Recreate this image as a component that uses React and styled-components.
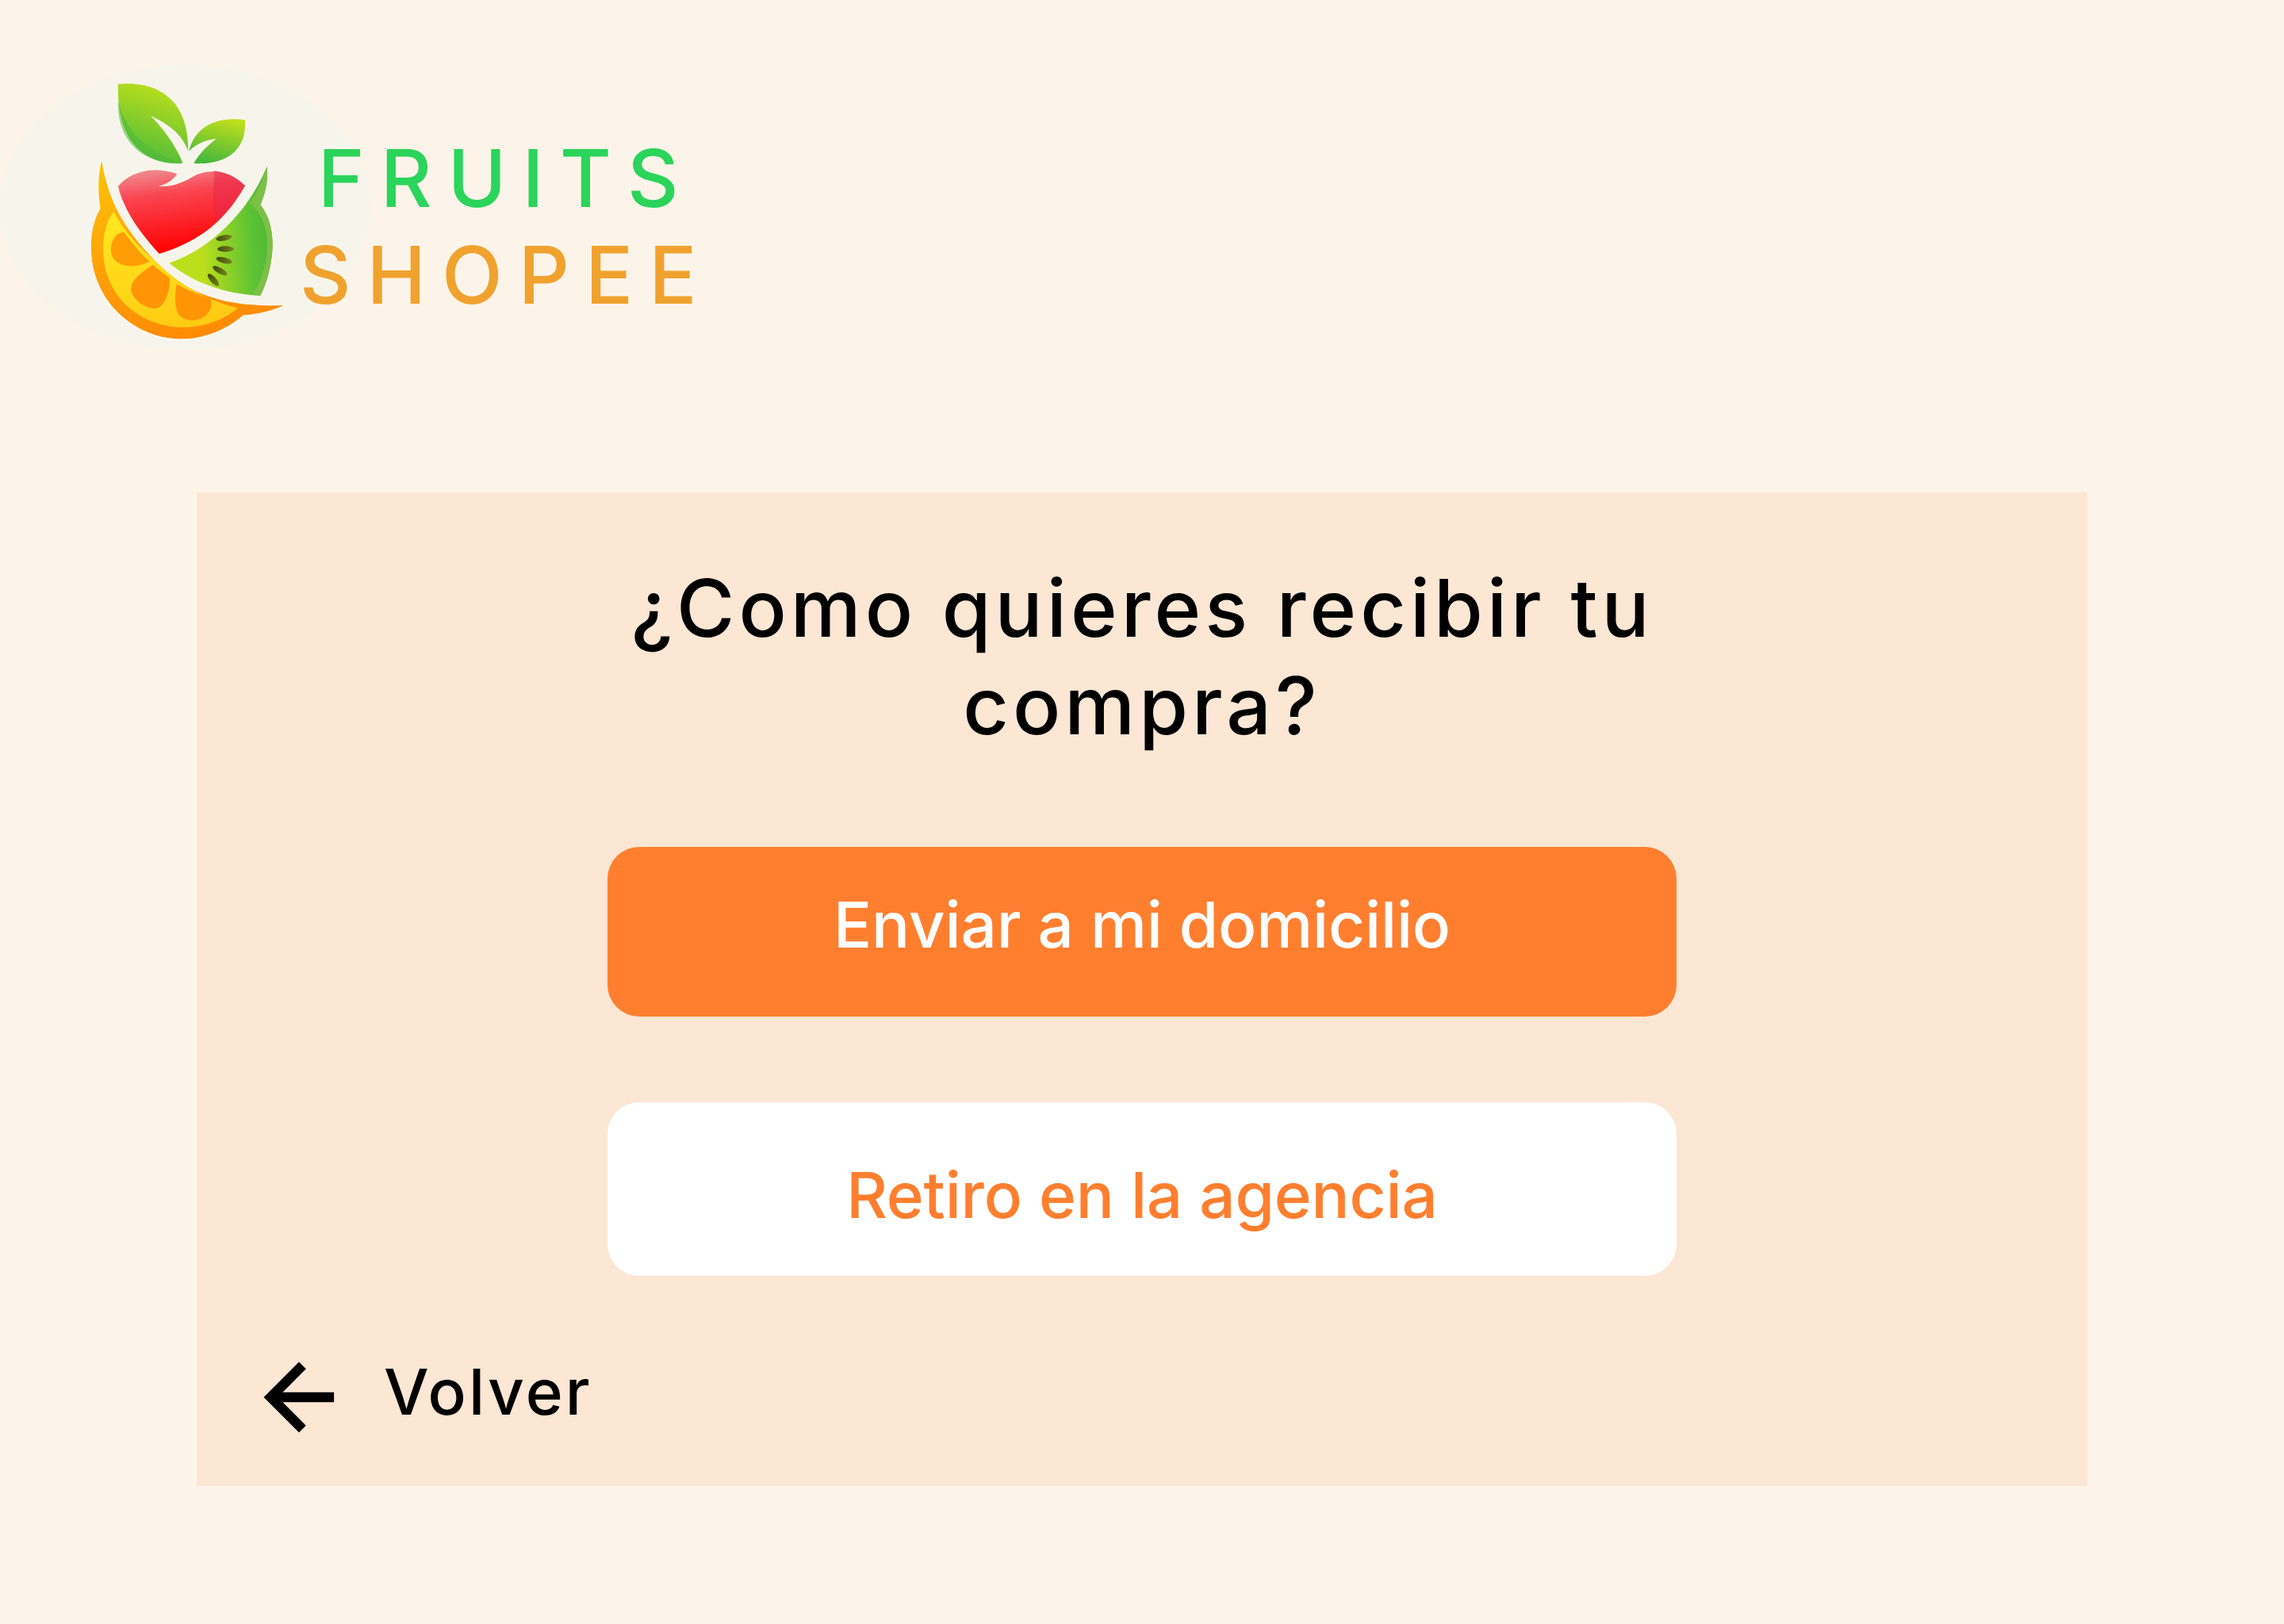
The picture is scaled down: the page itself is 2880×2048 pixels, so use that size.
import React from "react";
import styled, { createGlobalStyle } from "styled-components";

const GlobalStyle = createGlobalStyle`
  * { box-sizing: border-box; }
  body {
    margin: 0;
    background: #fdf4e9;
    font-family: Inter, "Liberation Sans", sans-serif;
  }
`;

function LogoMark() {
  return (
    <LogoSvg viewBox="0 0 1500 1200" aria-label="Fruits Shopee">
      <defs>
        <linearGradient id="leafBig" x1="0.65" y1="0.05" x2="0.4" y2="1">
          <stop offset="0" stopColor="#bade1c" />
          <stop offset="1" stopColor="#4fbb3b" />
        </linearGradient>
        <linearGradient id="leafSmall" x1="0.7" y1="0" x2="0.4" y2="1">
          <stop offset="0" stopColor="#c0df1c" />
          <stop offset="1" stopColor="#46b73e" />
        </linearGradient>
        <linearGradient id="apple" x1="0.35" y1="0" x2="0.55" y2="0.95">
          <stop offset="0" stopColor="#f0868c" />
          <stop offset="0.3" stopColor="#fa4450" />
          <stop offset="1" stopColor="#ff0000" />
        </linearGradient>
        <linearGradient id="kiwi" x1="0" y1="0.6" x2="1" y2="0.5">
          <stop offset="0.3" stopColor="#bcdf1c" />
          <stop offset="0.8" stopColor="#5cc234" />
          <stop offset="1" stopColor="#4db83a" />
        </linearGradient>
        <linearGradient id="orangeRim" x1="0.2" y1="0" x2="0.5" y2="1">
          <stop offset="0" stopColor="#ffc107" />
          <stop offset="0.55" stopColor="#ff9f06" />
          <stop offset="1" stopColor="#ff8a05" />
        </linearGradient>
        <linearGradient id="orangeFlesh" x1="0.2" y1="0" x2="0.5" y2="1">
          <stop offset="0" stopColor="#ffe81f" />
          <stop offset="1" stopColor="#ffcb14" />
        </linearGradient>
        <linearGradient id="seed" x1="0" y1="0" x2="1" y2="0">
          <stop offset="0" stopColor="#3f4a08" />
          <stop offset="1" stopColor="#76851a" />
        </linearGradient>
      </defs>

      <ellipse cx="700" cy="605" rx="702" ry="540" fill="#f7f5eb" />

      <path
        fill="url(#leafBig)"
        d="M447 138C590 125 715 190 712 392C690 330 640 290 570 258C620 310 665 370 692 438C560 445 440 370 447 138Z"
      />
      <path
        fill="#4cb93a"
        opacity="0.55"
        d="M447 200C470 310 560 400 692 438C560 445 440 370 447 200Z"
      />
      <path
        fill="url(#leafSmall)"
        d="M927 274C850 262 740 280 715 392C740 365 775 350 818 345C785 370 755 400 733 438C840 445 935 400 927 274Z"
      />

      <path
        fill="url(#orangeRim)"
        d="M385 428C370 480 370 550 380 610C340 670 335 780 360 860C410 1020 560 1105 690 1102C780 1100 860 1065 920 1012C970 1010 1030 995 1072 975C850 985 700 930 590 810C480 700 410 590 385 428Z"
      />
      <path
        fill="url(#orangeFlesh)"
        d="M430 620C385 680 380 780 405 860C450 990 570 1060 700 1058C780 1055 850 1030 900 985C790 960 680 900 590 810C520 750 465 690 430 620Z"
      />
      <path
        fill="#ff9c06"
        d="M470 698C430 700 415 745 422 780C430 820 490 845 565 810C530 775 495 735 470 698Z"
      />
      <path
        fill="#ff9504"
        d="M578 822C535 850 495 880 496 915C497 950 550 990 590 987C625 985 650 900 640 870C620 855 598 840 578 822Z"
      />
      <path
        fill="#ff9504"
        d="M668 895C660 940 660 990 680 1015C710 1045 780 1035 798 985C802 965 798 955 795 950C750 935 705 915 668 895Z"
      />

      <path
        fill="url(#apple)"
        d="M447 525C490 470 580 445 670 478C650 505 630 518 600 524C650 530 690 510 730 488C780 460 860 455 927 523C860 640 770 730 602 780C530 700 470 620 447 525Z"
      />
      <path
        fill="#e8284a"
        opacity="0.55"
        d="M810 466C850 470 895 490 927 523C895 575 860 620 820 660C790 600 815 530 810 466Z"
      />

      <path
        fill="url(#kiwi)"
        d="M1010 450C1015 500 1005 550 985 595C1020 640 1035 700 1030 770C1025 830 1010 890 985 938C860 935 730 890 640 815C800 760 940 620 1010 450Z"
      />
      <path
        fill="#7cc046"
        d="M1010 450C1015 500 1005 550 985 595C1020 640 1035 700 1030 770C1025 830 1010 890 985 938L955 936C1000 860 1015 790 1010 720C1005 670 985 625 945 588C970 550 995 500 1010 450Z"
      />
      <ellipse cx="847" cy="720" rx="30" ry="11" fill="url(#seed)" transform="rotate(-10 847 720)" />
      <ellipse cx="853" cy="762" rx="31" ry="11" fill="url(#seed)" />
      <ellipse cx="848" cy="805" rx="31" ry="11" fill="url(#seed)" transform="rotate(14 848 805)" />
      <ellipse cx="832" cy="844" rx="31" ry="11" fill="url(#seed)" transform="rotate(30 832 844)" />
      <ellipse cx="807" cy="879" rx="30" ry="11" fill="url(#seed)" transform="rotate(48 807 879)" />
    </LogoSvg>
  );
}

function ArrowBack() {
  return (
    <ArrowSvg viewBox="0 0 24 24">
      <path d="M20 11H7.83l5.59-5.59L12 4l-8 8 8 8 1.41-1.41L7.83 13H20v-2z" />
    </ArrowSvg>
  );
}

export default function App() {
  return (
    <Page>
      <GlobalStyle />
      <Header>
        <LogoMark />
        <Wordmark>
          <BrandLine $color="#2bd45b">FRUITS</BrandLine>
          <BrandLine $color="#f0a22e">SHOPEE</BrandLine>
        </Wordmark>
      </Header>

      <Panel>
        <Heading>¿Como quieres recibir tu compra?</Heading>
        <Choices>
          <Choice $primary>Enviar a mi domicilio</Choice>
          <Choice>Retiro en la agencia</Choice>
        </Choices>
        <BackRow>
          <ArrowBack />
          <BackLabel>Volver</BackLabel>
        </BackRow>
      </Panel>
    </Page>
  );
}

const Page = styled.div`
  min-height: 2048px;
  padding-top: 60px;
  background: #fdf4e9;
`;

const Header = styled.header`
  display: flex;
  height: 561px;
`;

const LogoSvg = styled.svg`
  width: 500px;
  height: 400px;
  flex: none;
`;

const Wordmark = styled.div`
  display: flex;
  flex-direction: column;
  align-items: center;
  margin: 104px 0 0 -122px;
`;

const BrandLine = styled.div`
  font-size: 100px;
  font-weight: 500;
  line-height: 122px;
  letter-spacing: 20px;
  color: ${(p) => p.$color};
`;

const Panel = styled.main`
  width: 2384px;
  height: 1253px;
  margin: 0 auto;
  padding-top: 84px;
  display: flex;
  flex-direction: column;
  align-items: center;
  background: #fce6d4;
`;

const Heading = styled.h1`
  width: 1348px;
  margin: 0;
  font-size: 100px;
  font-weight: 500;
  line-height: 123px;
  letter-spacing: 5px;
  text-align: center;
  color: #000;
`;

const Choices = styled.div`
  display: flex;
  flex-direction: column;
  gap: 108px;
  margin-top: 117px;
`;

const Choice = styled.button`
  width: 1348px;
  height: ${(p) => (p.$primary ? "214px" : "219px")};
  padding: ${(p) => (p.$primary ? "0 0 19px" : "14px 0 0")};
  border: none;
  border-radius: 40px;
  font-family: inherit;
  font-size: 80px;
  font-weight: 500;
  letter-spacing: -0.2px;
  background: ${(p) => (p.$primary ? "#ff7f2f" : "#fff")};
  color: ${(p) => (p.$primary ? "#fff" : "#ff7f2f")};
`;

const BackRow = styled.div`
  align-self: flex-start;
  display: flex;
  align-items: center;
  gap: 42px;
  margin: 72px 0 0 64px;
`;

const ArrowSvg = styled.svg`
  width: 130px;
  height: 130px;
  margin-top: 16px;
  flex: none;
  fill: #000;
  stroke: #000;
  stroke-width: 0.3;
`;

const BackLabel = styled.span`
  font-size: 80px;
  font-weight: 500;
  letter-spacing: 3.2px;
  color: #000;
`;
